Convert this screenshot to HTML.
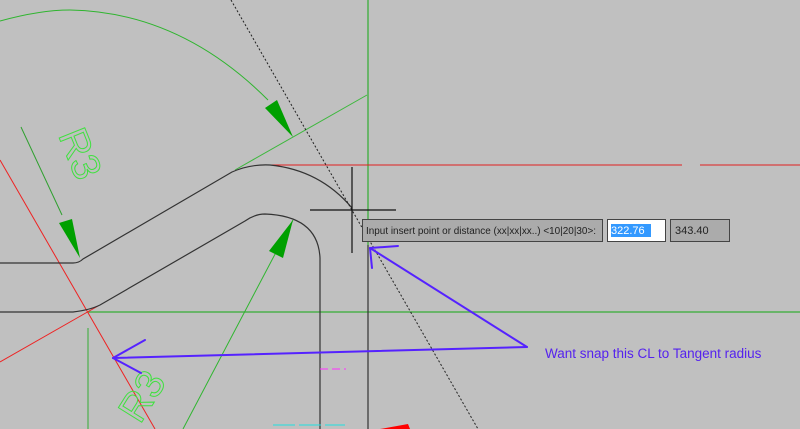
<!DOCTYPE html>
<html><head><style>
html,body{margin:0;padding:0;width:800px;height:429px;overflow:hidden;background:#c0c0c0}
.t{font-family:"Liberation Sans",sans-serif}
</style></head><body>
<svg width="800" height="429" viewBox="0 0 800 429" xmlns="http://www.w3.org/2000/svg" style="position:absolute;left:0;top:0">
<rect width="800" height="429" fill="#c0c0c0"/>
<line x1="368" y1="0" x2="368" y2="245" stroke="#4caf4c" stroke-width="1.5"/>
<line x1="88" y1="312" x2="800" y2="312" stroke="#4caf4c" stroke-width="1.5"/>
<line x1="88" y1="328" x2="88" y2="429" stroke="#4caf4c" stroke-width="1.2"/>
<path d="M0 21 Q 40 10 70 10 Q 180 12 268 100" fill="none" stroke="#2fb52f" stroke-width="1"/>
<line x1="235" y1="170" x2="367" y2="95" stroke="#3cb83c" stroke-width="1"/>
<line x1="21" y1="127" x2="62" y2="215" stroke="#2fa02f" stroke-width="1"/>
<line x1="183" y1="429" x2="293" y2="220" stroke="#2fb52f" stroke-width="1"/>
<polygon points="265,108 277,100 293,137" fill="#00a000"/>
<polygon points="59,223 72,219 80,258" fill="#00a000"/>
<polygon points="293,220 269,251 283,258" fill="#00a000"/>
<line x1="270" y1="165" x2="682" y2="165" stroke="#e02020" stroke-width="1"/>
<line x1="700" y1="165" x2="800" y2="165" stroke="#e02020" stroke-width="1"/>
<line x1="0" y1="160" x2="155" y2="429" stroke="#ee2222" stroke-width="1"/>
<line x1="0" y1="362" x2="98" y2="306" stroke="#ee2222" stroke-width="1"/>
<path d="M0 263 L73 263 Q79 263 83 259 L232 172 Q250 164 270 165 Q320 170 352 208" fill="none" stroke="#333" stroke-width="1.2"/>
<path d="M0 312 L73 312 Q90 310 100 305 L245 221 Q255 214 265 214 Q318 216 320 258 L320 429" fill="none" stroke="#333" stroke-width="1.2"/>
<line x1="231" y1="0" x2="478" y2="429" stroke="#222" stroke-width="1" stroke-dasharray="2,2"/>
<line x1="352" y1="167" x2="352" y2="253" stroke="#111" stroke-width="1.2"/>
<line x1="310" y1="210" x2="396" y2="210" stroke="#111" stroke-width="1.2"/>
<line x1="368" y1="245" x2="368" y2="429" stroke="#333" stroke-width="1.2"/>
<line x1="320" y1="369" x2="346" y2="369" stroke="#ff30ff" stroke-width="1" stroke-dasharray="8,4"/>
<line x1="273" y1="425" x2="345" y2="425" stroke="#20e0e0" stroke-width="1" stroke-dasharray="22,4"/>
<polygon points="380,429 408,424 410,429" fill="#ff0000"/>
<text x="0" y="0" class="t" font-size="40" fill="none" stroke="#40e040" stroke-width="1" transform="translate(58,135) rotate(68)">R3</text>
<text x="0" y="0" class="t" font-size="40" fill="none" stroke="#40e040" stroke-width="1" transform="translate(140,425) rotate(-58)">R3</text>
<g stroke="#5522ff" stroke-width="2" fill="none" stroke-linecap="round">
<line x1="113" y1="358" x2="527" y2="347"/>
<line x1="113" y1="358" x2="145" y2="340"/>
<line x1="113" y1="358" x2="141" y2="373"/>
<line x1="527" y1="347" x2="370" y2="248"/>
<line x1="370" y1="248" x2="398" y2="246"/>
<line x1="370" y1="248" x2="372" y2="268"/>
</g>
<text x="545" y="358" class="t" font-size="13.5" fill="#5522ee">Want snap this CL to Tangent radius</text>
<rect x="362.5" y="219.5" width="240" height="22" fill="#ababab" stroke="#444"/>
<text x="366" y="234" class="t" font-size="10" fill="#222" textLength="230" lengthAdjust="spacingAndGlyphs">Input insert point or distance (xx|xx|xx..) &lt;10|20|30&gt;:</text>
<rect x="607.5" y="219.5" width="58" height="22" fill="#fff" stroke="#444"/>
<rect x="611" y="224" width="40" height="13" fill="#3399ff"/>
<text x="611" y="234" class="t" font-size="11" fill="#fff">322.76</text>
<rect x="670.5" y="219.5" width="59" height="22" fill="#ababab" stroke="#444"/>
<text x="675" y="234" class="t" font-size="11" fill="#222">343.40</text>
</svg>
</body></html>
